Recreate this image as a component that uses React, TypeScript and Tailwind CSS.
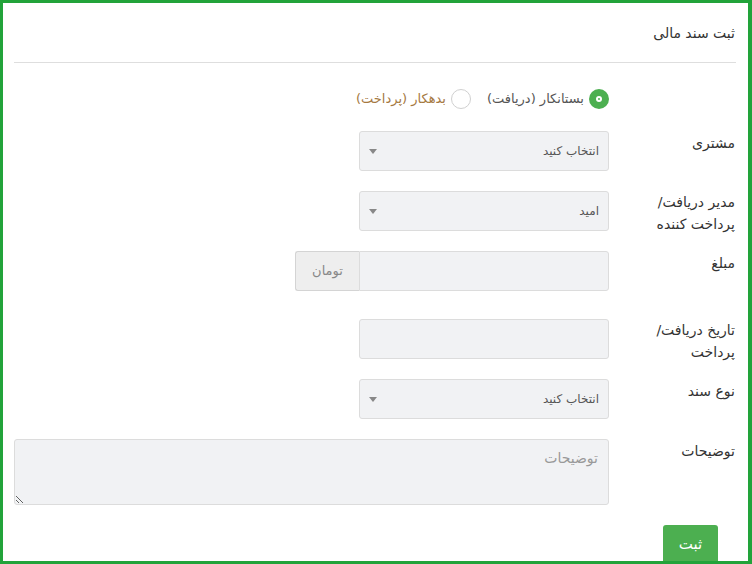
import React from 'react';

const FONT = { fontFamily: '"DejaVu Sans", "Noto Sans", sans-serif' };

function SelectBox({ value }: { value: string }) {
  return (
    <div className="w-[250px] h-10 bg-[#f1f2f4] border border-[#dcdcdc] rounded-[3px] flex items-center justify-between pr-[9px] pl-[9px]">
      <span className="text-[12px] text-[#555]">{value}</span>
      <span className="w-0 h-0 border-l-[4px] border-r-[4px] border-t-[5px] border-l-transparent border-r-transparent border-t-[#888]" />
    </div>
  );
}

function Row({
  label,
  children,
  className = '',
}: {
  label: React.ReactNode;
  children: React.ReactNode;
  className?: string;
}) {
  return (
    <div className={`flex items-start ${className}`}>
      <div className="w-[127px] shrink-0 h-10 text-[14px] leading-[22px] text-[#333] pt-[1px]">
        {label}
      </div>
      <div className="flex-1 flex">{children}</div>
    </div>
  );
}

export default function App() {
  return (
    <div
      dir="rtl"
      style={FONT}
      className="w-[752px] h-[564px] bg-white border-[3px] border-r-4 border-[#22a33a] overflow-hidden pr-[12px] pl-[11px]"
    >
      {/* header */}
      <div className="h-[60px] flex items-center pt-[1px] pr-[1px] border-b border-[#dedede]">
        <h1 className="text-[14px] text-[#333]">ثبت سند مالی</h1>
      </div>

      <div className="pt-[26px]">
        {/* radios */}
        <div className="flex items-center h-5 mr-[127px] gap-[4px] text-[13px]">
          <label className="flex items-center gap-[5px] ml-[12px]">
            <span className="w-5 h-5 rounded-full bg-[#4caf50] flex items-center justify-center">
              <span className="w-[6px] h-[6px] rounded-full bg-white flex items-center justify-center">
                <span className="w-[2px] h-[2px] rounded-full bg-[#4caf50]" />
              </span>
            </span>
            <span className="text-[#555]">بستانکار (دریافت)</span>
          </label>
          <label className="flex items-center gap-[5px]">
            <span className="w-5 h-5 rounded-full bg-white border border-[#d0d0d0]" />
            <span className="text-[#a5783f]">بدهکار (پرداخت)</span>
          </label>
        </div>

        <div className="mt-[22px] flex flex-col">
          <Row label={<div className="pr-[1px]">مشتری</div>} className="mb-5">
            <SelectBox value="انتخاب کنید" />
          </Row>

          <Row
            label={
              <div className="-mt-[1px] pr-[1px]">
                مدیر دریافت/
                <br />
                پرداخت کننده
              </div>
            }
            className="mb-5"
          >
            <SelectBox value="امید" />
          </Row>

          <Row label={<div className="pr-[1px]">مبلغ</div>} className="mb-[28px]">
            <div className="flex">
              <input className="w-[250px] h-10 bg-[#f1f2f4] border border-[#dcdcdc] rounded-r-[3px] outline-none" />
              <div className="w-[64px] h-10 bg-[#eeeeee] border border-r-0 border-[#d4d4d4] rounded-l-[3px] flex items-center justify-center text-[13px] text-[#888]">
                تومان
              </div>
            </div>
          </Row>

          <Row
            label={
              <div className="-mt-[1px] pr-[1px]">
                تاریخ دریافت/
                <br />
                پرداخت
              </div>
            }
            className="mb-5"
          >
            <input className="w-[250px] h-10 bg-[#f1f2f4] border border-[#dcdcdc] rounded-[3px] outline-none" />
          </Row>

          <Row label={<div className="pr-[1px]">نوع سند</div>} className="mb-5">
            <SelectBox value="انتخاب کنید" />
          </Row>

          <Row label={<div className="pr-[1px]">توضیحات</div>} className="mb-5">
            <textarea
              placeholder="توضیحات"
              className="w-full h-[66px] bg-[#f1f2f4] border border-[#dcdcdc] rounded-[3px] outline-none px-[10px] py-[8px] text-[14px] placeholder:text-[#999]"
            />
          </Row>

          <div className="flex">
            <button className="mr-[18px] w-[55px] h-[38px] bg-[#4caf50] text-white text-[15px] rounded-[3px]">
              ثبت
            </button>
          </div>
        </div>
      </div>
    </div>
  );
}
